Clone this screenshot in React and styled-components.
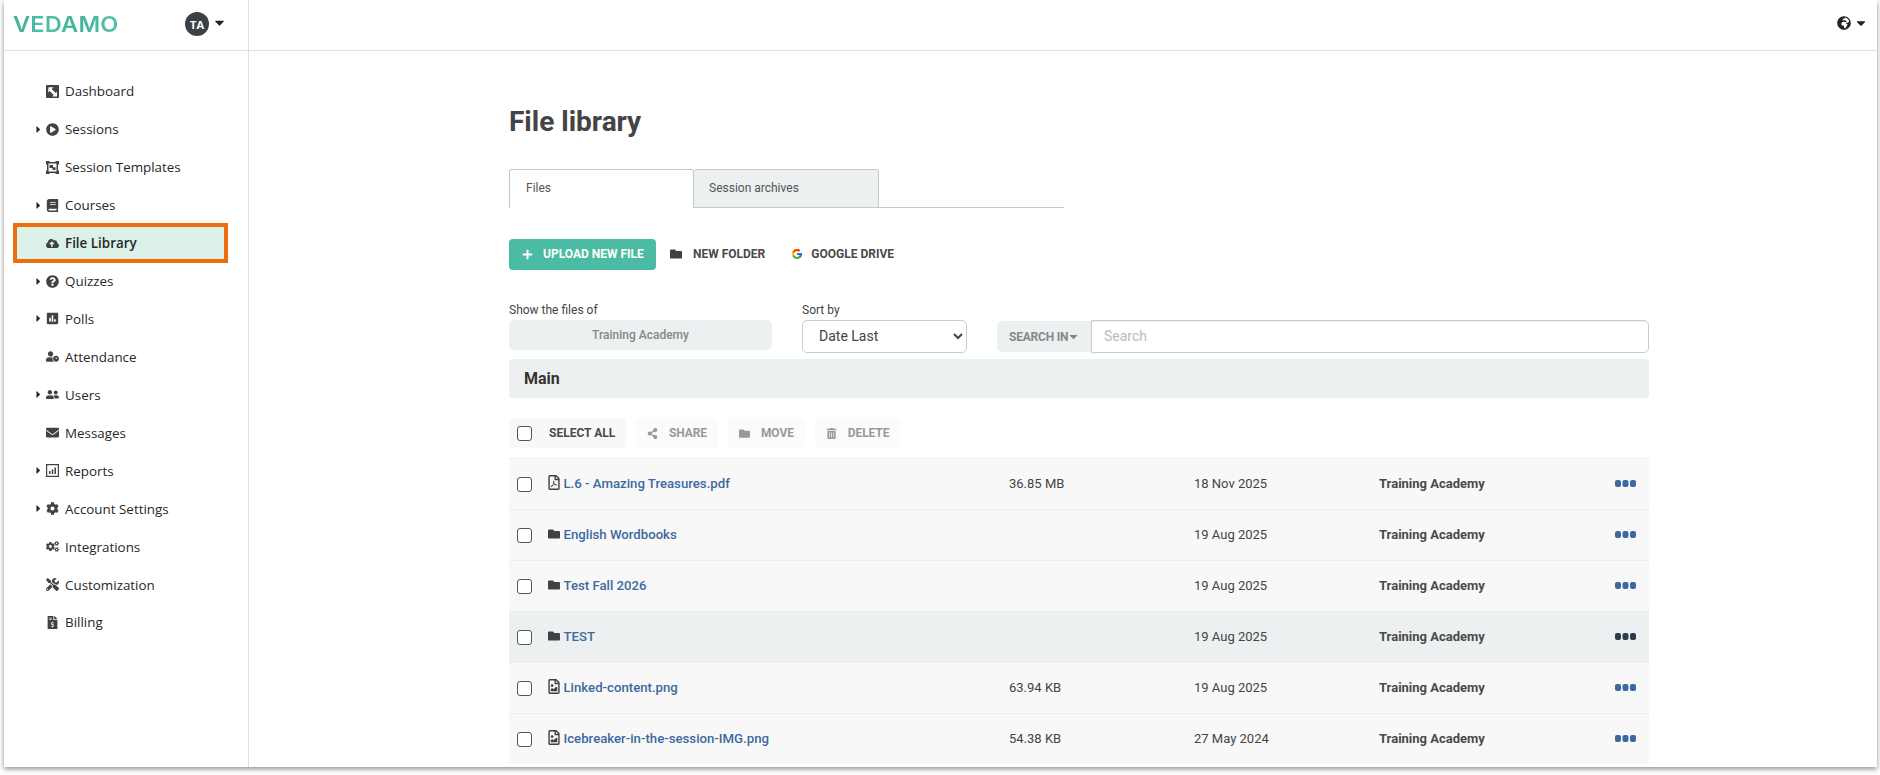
import React from "react";
import styled, { createGlobalStyle } from "styled-components";
import {
  FaCaretDown,
  FaCaretRight,
  FaPlayCircle,
  FaBook,
  FaCloudUploadAlt,
  FaQuestionCircle,
  FaPoll,
  FaUserClock,
  FaUserFriends,
  FaEnvelope,
  FaCog,
  FaCogs,
  FaTools,
  FaFileInvoiceDollar,
  FaGlobeAfrica,
  FaPlus,
  FaFolder,
  FaShareAlt,
  FaTrashAlt,
  FaRegFilePdf,
  FaRegFileImage
} from "react-icons/fa";
import { FcGoogle } from "react-icons/fc";

const GlobalStyle = createGlobalStyle`
  html, body {
    margin: 0;
    background: #fff;
    overflow: hidden;
  }
  * {
    box-sizing: border-box;
  }
`;

const DashboardIcon = () => (
  <svg width="13" height="13" viewBox="0 0 13 13">
    <rect width="13" height="13" rx="1" fill="#3f4347" />
    <path d="M2.500 2.200h5L5.700 4l4 4L11 6.700V11.500H6.200L7.600 10l-4-4L2 7.500z" fill="#fff" />
  </svg>
);

const TemplatesIcon = () => (
  <svg width="13" height="13" viewBox="0 0 13 13" fill="#3f4347">
    <path d="M0 0h3.500v1h6V0H13v3.500h-1v6h1V13H9.500v-1h-6v1H0V9.500h1v-6H0zM2.500 2.500v8h8v-8z" />
    <path d="M3.500 4h3.500v2.200h2.500V9h-3V7H3.500z" />
  </svg>
);

const ReportsIcon = () => (
  <svg width="13" height="13" viewBox="0 0 13 13" fill="#3f4347">
    <path d="M0 0h13v13H0zM1.200 1.200v10.600h10.600V1.200z" />
    <path d="M3 7h1.500v3H3zM5.800 5.500h1.500V10H5.800zM8.500 3.500H10V10H8.500z" />
  </svg>
);

const DotsIcon = () => (
  <svg width="21" height="7" viewBox="0 0 21 7" fill="currentColor">
    <rect x="0" y="0" width="6" height="7" rx="2" />
    <rect x="7.500" y="0" width="6" height="7" rx="2" />
    <rect x="15" y="0" width="6" height="7" rx="2" />
  </svg>
);

const NAV = [
  { label: "Dashboard", icon: <DashboardIcon /> },
  { label: "Sessions", icon: <FaPlayCircle />, caret: true },
  { label: "Session Templates", icon: <TemplatesIcon /> },
  { label: "Courses", icon: <FaBook />, caret: true },
  { label: "File Library", icon: <FaCloudUploadAlt />, active: true },
  { label: "Quizzes", icon: <FaQuestionCircle />, caret: true },
  { label: "Polls", icon: <FaPoll />, caret: true },
  { label: "Attendance", icon: <FaUserClock /> },
  { label: "Users", icon: <FaUserFriends />, caret: true },
  { label: "Messages", icon: <FaEnvelope /> },
  { label: "Reports", icon: <ReportsIcon />, caret: true },
  { label: "Account Settings", icon: <FaCog />, caret: true },
  { label: "Integrations", icon: <FaCogs /> },
  { label: "Customization", icon: <FaTools /> },
  { label: "Billing", icon: <FaFileInvoiceDollar /> }
];

const FILES = [
  { name: "L.6 - Amazing Treasures.pdf", kind: "pdf", size: "36.85 MB", date: "18 Nov 2025" },
  { name: "English Wordbooks", kind: "folder", date: "19 Aug 2025" },
  { name: "Test Fall 2026", kind: "folder", date: "19 Aug 2025" },
  { name: "TEST", kind: "folder", date: "19 Aug 2025", hovered: true },
  { name: "Linked-content.png", kind: "image", size: "63.94 KB", date: "19 Aug 2025" },
  { name: "Icebreaker-in-the-session-IMG.png", kind: "image", size: "54.38 KB", date: "27 May 2024" }
];

const FILE_ICONS = {
  pdf: <FaRegFilePdf />,
  image: <FaRegFileImage />,
  folder: <FaFolder />
};

const App = () => (
  <>
    <GlobalStyle />
    <Page>
      <Frame>
        <Header>
          <Brand>
            <Logo>VEDAMO</Logo>
            <UserMenu>
              <Avatar>TA</Avatar>
              <FaCaretDown />
            </UserMenu>
          </Brand>
          <Language>
            <FaGlobeAfrica />
            <FaCaretDown />
          </Language>
        </Header>
        <Body>
          <Sidebar>
            {NAV.map(item => (
              <NavItem key={item.label} $active={item.active}>
                <NavCaret>{item.caret && <FaCaretRight />}</NavCaret>
                <NavIcon>{item.icon}</NavIcon>
                {item.label}
              </NavItem>
            ))}
          </Sidebar>
          <Main>
            <Content>
              <Title>File library</Title>
              <Tabs>
                <Tab $active>Files</Tab>
                <Tab>Session archives</Tab>
              </Tabs>
              <Actions>
                <UploadButton>
                  <FaPlus />
                  UPLOAD NEW FILE
                </UploadButton>
                <PlainAction $gap={11}>
                  <FaFolder />
                  NEW FOLDER
                </PlainAction>
                <PlainAction $gap={8}>
                  <FcGoogle />
                  GOOGLE DRIVE
                </PlainAction>
              </Actions>
              <Filters>
                <Field>
                  <Label>Show the files of</Label>
                  <OwnerBox>Training Academy</OwnerBox>
                </Field>
                <Field>
                  <Label>Sort by</Label>
                  <SortSelect defaultValue="last">
                    <option value="last">Date Last</option>
                    <option value="first">Date First</option>
                  </SortSelect>
                </Field>
                <SearchGroup>
                  <SearchIn>
                    SEARCH IN
                    <FaCaretDown />
                  </SearchIn>
                  <SearchInput placeholder="Search" />
                </SearchGroup>
              </Filters>
              <FolderBar>Main</FolderBar>
              <Toolbar>
                <SelectAll>
                  <Checkbox type="checkbox" />
                  SELECT ALL
                </SelectAll>
                <ToolButton>
                  <FaShareAlt />
                  SHARE
                </ToolButton>
                <ToolButton>
                  <FaFolder />
                  MOVE
                </ToolButton>
                <ToolButton>
                  <FaTrashAlt />
                  DELETE
                </ToolButton>
              </Toolbar>
              <FileList>
                {FILES.map(file => (
                  <FileRow key={file.name} $hovered={file.hovered}>
                    <Checkbox type="checkbox" />
                    <FileName>
                      <FileIcon $folder={file.kind === "folder"}>{FILE_ICONS[file.kind]}</FileIcon>
                      <a>{file.name}</a>
                    </FileName>
                    <span>{file.size}</span>
                    <span>{file.date}</span>
                    <Owner>Training Academy</Owner>
                    <MoreDots $hovered={file.hovered}>
                      <DotsIcon />
                    </MoreDots>
                  </FileRow>
                ))}
              </FileList>
            </Content>
          </Main>
        </Body>
      </Frame>
    </Page>
  </>
);

export default App;

const Page = styled.div`
  width: 1880px;
  height: 775px;
  padding: 0 3px 8px 4px;
`;

const Frame = styled.div`
  height: 100%;
  display: flex;
  flex-direction: column;
  background: #fff;
  box-shadow: 0 2px 5px rgba(0, 0, 0, 0.45);
  overflow: hidden;
`;

const Header = styled.header`
  flex: 0 0 51px;
  display: flex;
  justify-content: space-between;
  border-bottom: 1px solid #e0e0e0;
`;

const Brand = styled.div`
  width: 245px;
  display: flex;
  align-items: center;
  padding: 0 0 2px 9px;
  border-right: 1px solid #e0e0e0;
`;

const Logo = styled.div`
  width: 172px;
  font-family: "Inter", sans-serif;
  font-weight: 600;
  font-size: 22px;
  line-height: 24px;
  letter-spacing: 0.2px;
  transform: scaleX(1.07);
  transform-origin: left center;
  background: linear-gradient(90deg, #3fae96, #52c0a8 30px, #43b39b 60px, #52c0a8 98px);
  -webkit-background-clip: text;
  background-clip: text;
  color: transparent;
`;

const UserMenu = styled.div`
  display: flex;
  align-items: center;
  gap: 3px;
  color: #222;
  font-size: 15px;
  svg {
    margin-top: -3px;
  }
`;

const Avatar = styled.div`
  width: 24px;
  height: 24px;
  border-radius: 50%;
  display: flex;
  align-items: center;
  justify-content: center;
  background: #3d4044;
  color: #fff;
  font-family: "Open Sans", sans-serif;
  font-weight: 700;
  font-size: 11px;
`;

const Language = styled.div`
  display: flex;
  align-items: center;
  gap: 3px;
  padding: 0 9px 5px 0;
  color: #222;
  font-size: 14px;
`;

const Body = styled.div`
  flex: 1;
  display: flex;
  min-height: 0;
`;

const Sidebar = styled.nav`
  width: 245px;
  flex-shrink: 0;
  padding: 21.4px 0 0 9px;
  border-right: 1px solid #e0e0e0;
`;

const NavItem = styled.div`
  width: 215px;
  height: ${({ $active }) => ($active ? "39.95px" : "37.95px")};
  margin: ${({ $active }) => ($active ? "-1px 0" : "0")};
  padding-left: ${({ $active }) => ($active ? "18px" : "22px")};
  display: flex;
  align-items: center;
  font-family: "Open Sans", sans-serif;
  font-size: 13.4px;
  font-weight: ${({ $active }) => ($active ? 600 : 500)};
  color: #26282b;
  background: ${({ $active }) => ($active ? "#dcf1e8" : "transparent")};
  border: ${({ $active }) => ($active ? "4px solid #ec6e0c" : "none")};
`;

const NavCaret = styled.span`
  width: 11px;
  display: flex;
  font-size: 11px;
  margin-left: -2px;
  margin-right: 2px;
  color: #26282b;
`;

const NavIcon = styled.span`
  width: 19px;
  display: flex;
  font-size: 13px;
  color: #3f4347;
`;

const Main = styled.main`
  flex: 1;
  min-width: 0;
  padding-left: 260px;
  overflow: hidden;
`;

const Content = styled.div`
  width: 1140px;
  font-family: "Roboto", sans-serif;
  font-size: 13px;
  color: #444;
`;

const Title = styled.h1`
  margin: 0 0 30px;
  padding-top: 54px;
  font-size: 28px;
  line-height: 34px;
  font-weight: 700;
  color: #424447;
`;

const Tabs = styled.div`
  width: 555px;
  display: flex;
  border-bottom: 1px solid #c4c8cb;
  margin-bottom: 31px;
`;

const Tab = styled.div`
  width: 185px;
  height: 39px;
  margin-bottom: -1px;
  padding: 0 ${({ $active }) => ($active ? "16px" : "15px")} 2px;
  display: flex;
  align-items: center;
  font-size: 12px;
  color: #555;
  border: 1px solid #c4c8cb;
  border-bottom: ${({ $active }) => ($active ? "none" : "1px solid #c4c8cb")};
  border-left: ${({ $active }) => ($active ? "1px solid #c4c8cb" : "none")};
  border-radius: 3px 3px 0 0;
  background: ${({ $active }) => ($active ? "#fff" : "#ecf0f1")};
`;

const Actions = styled.div`
  display: flex;
  align-items: center;
  gap: 14px;
  height: 31px;
  margin-bottom: 33px;
`;

const UploadButton = styled.div`
  width: 147px;
  height: 31px;
  padding: 0 0 1px 13px;
  display: flex;
  align-items: center;
  gap: 10px;
  border-radius: 4px;
  background: #4bbba3;
  color: #fff;
  font-weight: 700;
  font-size: 12px;
  svg {
    font-size: 11px;
  }
`;

const PlainAction = styled.div`
  display: flex;
  align-items: center;
  gap: ${({ $gap }) => $gap}px;
  padding: 0 12px 1px 0;
  color: #4a4a4a;
  font-weight: 700;
  font-size: 12px;
  svg {
    font-size: 12px;
    color: #3f4144;
  }
`;

const Filters = styled.div`
  display: flex;
  align-items: flex-end;
  margin-bottom: 6px;
`;

const Field = styled.div`
  display: flex;
  flex-direction: column;
  margin-right: 30px;
`;

const Label = styled.label`
  font-size: 12px;
  line-height: 14px;
  margin-bottom: 3px;
  color: #444;
`;

const OwnerBox = styled.div`
  width: 263px;
  height: 30px;
  margin-bottom: 3px;
  display: flex;
  align-items: center;
  justify-content: center;
  border-radius: 5px;
  background: #ecf0f1;
  color: #888;
  font-weight: 500;
  font-size: 12px;
`;

const SortSelect = styled.select`
  width: 165px;
  height: 33px;
  padding: 0 0 2px 12px;
  border: 1px solid #ccc;
  border-radius: 5px;
  background: #fff;
  color: #444;
  font-family: "Roboto", sans-serif;
  font-size: 14px;
`;

const SearchGroup = styled.div`
  flex: 1;
  display: flex;
  height: 33px;
`;

const SearchIn = styled.div`
  width: 94px;
  height: 31px;
  margin-top: 1px;
  padding-left: 12px;
  display: flex;
  align-items: center;
  border-radius: 5px 0 0 5px;
  background: #ecf0f1;
  color: #888;
  font-weight: 700;
  font-size: 12px;
  letter-spacing: -0.2px;
  svg {
    font-size: 13px;
    margin-left: -1px;
  }
`;

const SearchInput = styled.input`
  flex: 1;
  padding: 0 12px 2px;
  border: 1px solid #ccc;
  border-radius: 0 5px 5px 0;
  box-shadow: inset 0 1px 1px rgba(0, 0, 0, 0.075);
  font-family: "Roboto", sans-serif;
  font-size: 14px;
  color: #444;
  &::placeholder {
    color: #bbb;
  }
`;

const FolderBar = styled.div`
  height: 39px;
  padding: 0 0 1px 15px;
  display: flex;
  align-items: center;
  border-radius: 3px;
  background: #ecf0f1;
  color: #333;
  font-weight: 700;
  font-size: 16px;
  margin-bottom: 20px;
`;

const Toolbar = styled.div`
  display: flex;
  gap: 10px;
  height: 30px;
  margin-bottom: 10px;
`;

const SelectAll = styled.div`
  width: 117px;
  display: flex;
  align-items: center;
  gap: 17px;
  padding-left: 8px;
  border-radius: 4px;
  background: #f8f8f8;
  color: #4a4a4a;
  font-weight: 700;
  font-size: 12px;
`;

const ToolButton = styled.div`
  display: flex;
  align-items: center;
  gap: 11px;
  padding: 0 11px;
  border-radius: 4px;
  background: #fbfbfb;
  color: #999;
  font-weight: 700;
  font-size: 12px;
  letter-spacing: -0.1px;
  svg {
    font-size: 11px;
  }
`;

const Checkbox = styled.input`
  appearance: none;
  width: 15px;
  height: 15px;
  margin: 0;
  border: 1px solid #555;
  border-radius: 3px;
  background: #fff;
`;

const FileList = styled.div`
  display: flex;
  flex-direction: column;
`;

const FileRow = styled.div`
  height: 51px;
  padding: 0 13px 2px 8px;
  display: grid;
  grid-template-columns: 31px 461px 185px 185px 1fr 21px;
  align-items: center;
  border-top: 1px solid #eceeef;
  background: ${({ $hovered }) => ($hovered ? "#ecf0f1" : "#f8f8f8")};
  ${Checkbox} {
    margin-top: 3px;
  }
`;

const FileName = styled.div`
  display: flex;
  align-items: center;
  gap: 3.5px;
  font-weight: 500;
  font-size: 13.2px;
  a {
    color: #3d6a9e;
  }
`;

const FileIcon = styled.span`
  width: 12px;
  display: flex;
  justify-content: center;
  font-size: ${({ $folder }) => ($folder ? "12px" : "15px")};
  margin-top: ${({ $folder }) => ($folder ? "-1px" : "-2px")};
  color: #3f4144;
`;

const Owner = styled.span`
  font-weight: 700;
  color: #4a4a4a;
`;

const MoreDots = styled.span`
  display: flex;
  color: ${({ $hovered }) => ($hovered ? "#2f3b4a" : "#3d6a9e")};
`;
